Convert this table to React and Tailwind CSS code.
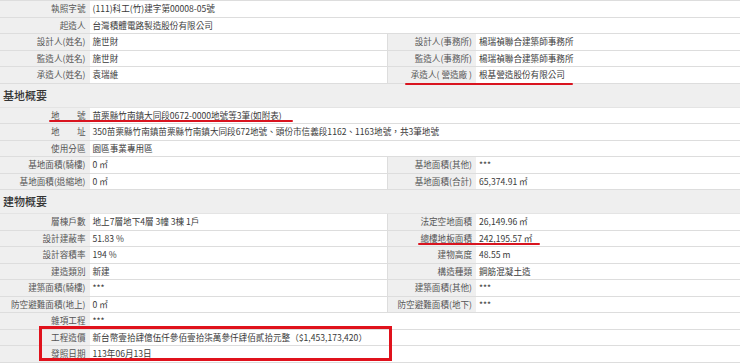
import React from 'react';

const FullRow = ({ label, value }) => (
  <div className="flex h-[16.5px] border-b border-[#dddddd]">
    <div className="flex w-[89.5px] shrink-0 items-center justify-end whitespace-pre bg-[#efefef] pr-[4px] text-[#555555]">
      {label}
    </div>
    <div className="flex flex-1 items-center whitespace-nowrap pl-[3px] text-[#3a3a3a]">{value}</div>
  </div>
);

const PairRow = ({ left, right }) => (
  <div className="flex h-[16.5px] border-b border-[#dddddd]">
    <div className="flex w-[89.5px] shrink-0 items-center justify-end whitespace-pre bg-[#efefef] pr-[4px] text-[#555555]">
      {left[0]}
    </div>
    <div className="flex w-[297.5px] shrink-0 items-center whitespace-nowrap pl-[3px] text-[#3a3a3a]">
      {left[1]}
    </div>
    <div className="flex w-[89px] shrink-0 items-center justify-end whitespace-pre border-l border-[#dddddd] bg-[#efefef] pr-[4px] text-[#555555]">
      {right[0]}
    </div>
    <div className="flex flex-1 items-center whitespace-nowrap pl-[3px] text-[#3a3a3a]">{right[1]}</div>
  </div>
);

const SectionHeader = ({ title }) => (
  <div className="flex h-[24px] items-center border-b border-[#e4e4e4] bg-[#efefef] pl-[3px] text-[11px] font-medium text-[#333333]">
    {title}
  </div>
);

const App = () => {
  return (
    <div className="relative h-[363px] w-[740px] overflow-hidden bg-white font-['Noto_Sans_CJK_TC','Noto_Sans_CJK_JP',sans-serif] text-[8.6px] leading-none">
      <div className="border-t border-[#dddddd]">
        <FullRow label="執照字號" value="(111)科工(竹)建字第00008-05號" />
        <FullRow label="起造人" value="台灣積體電路製造股份有限公司" />
        <PairRow left={['設計人(姓名)', '施世財']} right={['設計人(事務所)', '楊瑞禎聯合建築師事務所']} />
        <PairRow left={['監造人(姓名)', '施世財']} right={['監造人(事務所)', '楊瑞禎聯合建築師事務所']} />
        <PairRow left={['承造人(姓名)', '袁瑞維']} right={['承造人( 營造廠 )', '根基營造股份有限公司']} />

        <SectionHeader title="基地概要" />
        <FullRow label="地　　號" value="苗栗縣竹南鎮大同段0672-0000地號等3筆(如附表)" />
        <FullRow
          label="地　　址"
          value="350苗栗縣竹南鎮苗栗縣竹南鎮大同段672地號、頭份市信義段1162、1163地號，共3筆地號"
        />
        <FullRow label="使用分區" value="園區事業專用區" />
        <PairRow left={['基地面積(騎樓)', '0 ㎡']} right={['基地面積(其他)', '***']} />
        <PairRow left={['基地面積(退縮地)', '0 ㎡']} right={['基地面積(合計)', '65,374.91 ㎡']} />

        <SectionHeader title="建物概要" />
        <PairRow left={['層棟戶數', '地上7層地下4層 3幢 3棟 1戶']} right={['法定空地面積', '26,149.96 ㎡']} />
        <PairRow left={['設計建蔽率', '51.83 %']} right={['總樓地板面積', '242,195.57 ㎡']} />
        <PairRow left={['設計容積率', '194 %']} right={['建物高度', '48.55 m']} />
        <PairRow left={['建造類別', '新建']} right={['構造種類', '鋼筋混凝土造']} />
        <PairRow left={['建築面積(騎樓)', '***']} right={['建築面積(其他)', '***']} />
        <PairRow left={['防空避難面積(地上)', '0 ㎡']} right={['防空避難面積(地下)', '***']} />
        <FullRow label="雜項工程" value="***" />
        <FullRow label="工程造價" value="新台幣壹拾肆億伍仟參佰壹拾柒萬參仟肆佰貳拾元整（$1,453,173,420）" />
        <FullRow label="發照日期" value="113年06月13日" />
      </div>

      {/* red annotations */}
      <div className="absolute left-[405px] top-[82.5px] h-[2px] w-[168px] rounded-full bg-[#d9141f]" />
      <div className="absolute left-[49px] top-[120.3px] h-[2px] w-[244px] rounded-full bg-[#d9141f]" />
      <div className="absolute left-[418px] top-[243.3px] h-[2px] w-[122px] rounded-full bg-[#d9141f]" />
      <div className="absolute left-[39px] top-[326px] h-[35px] w-[353px] border-[3px] border-[#e0121c]" />
    </div>
  );
};

export default App;
